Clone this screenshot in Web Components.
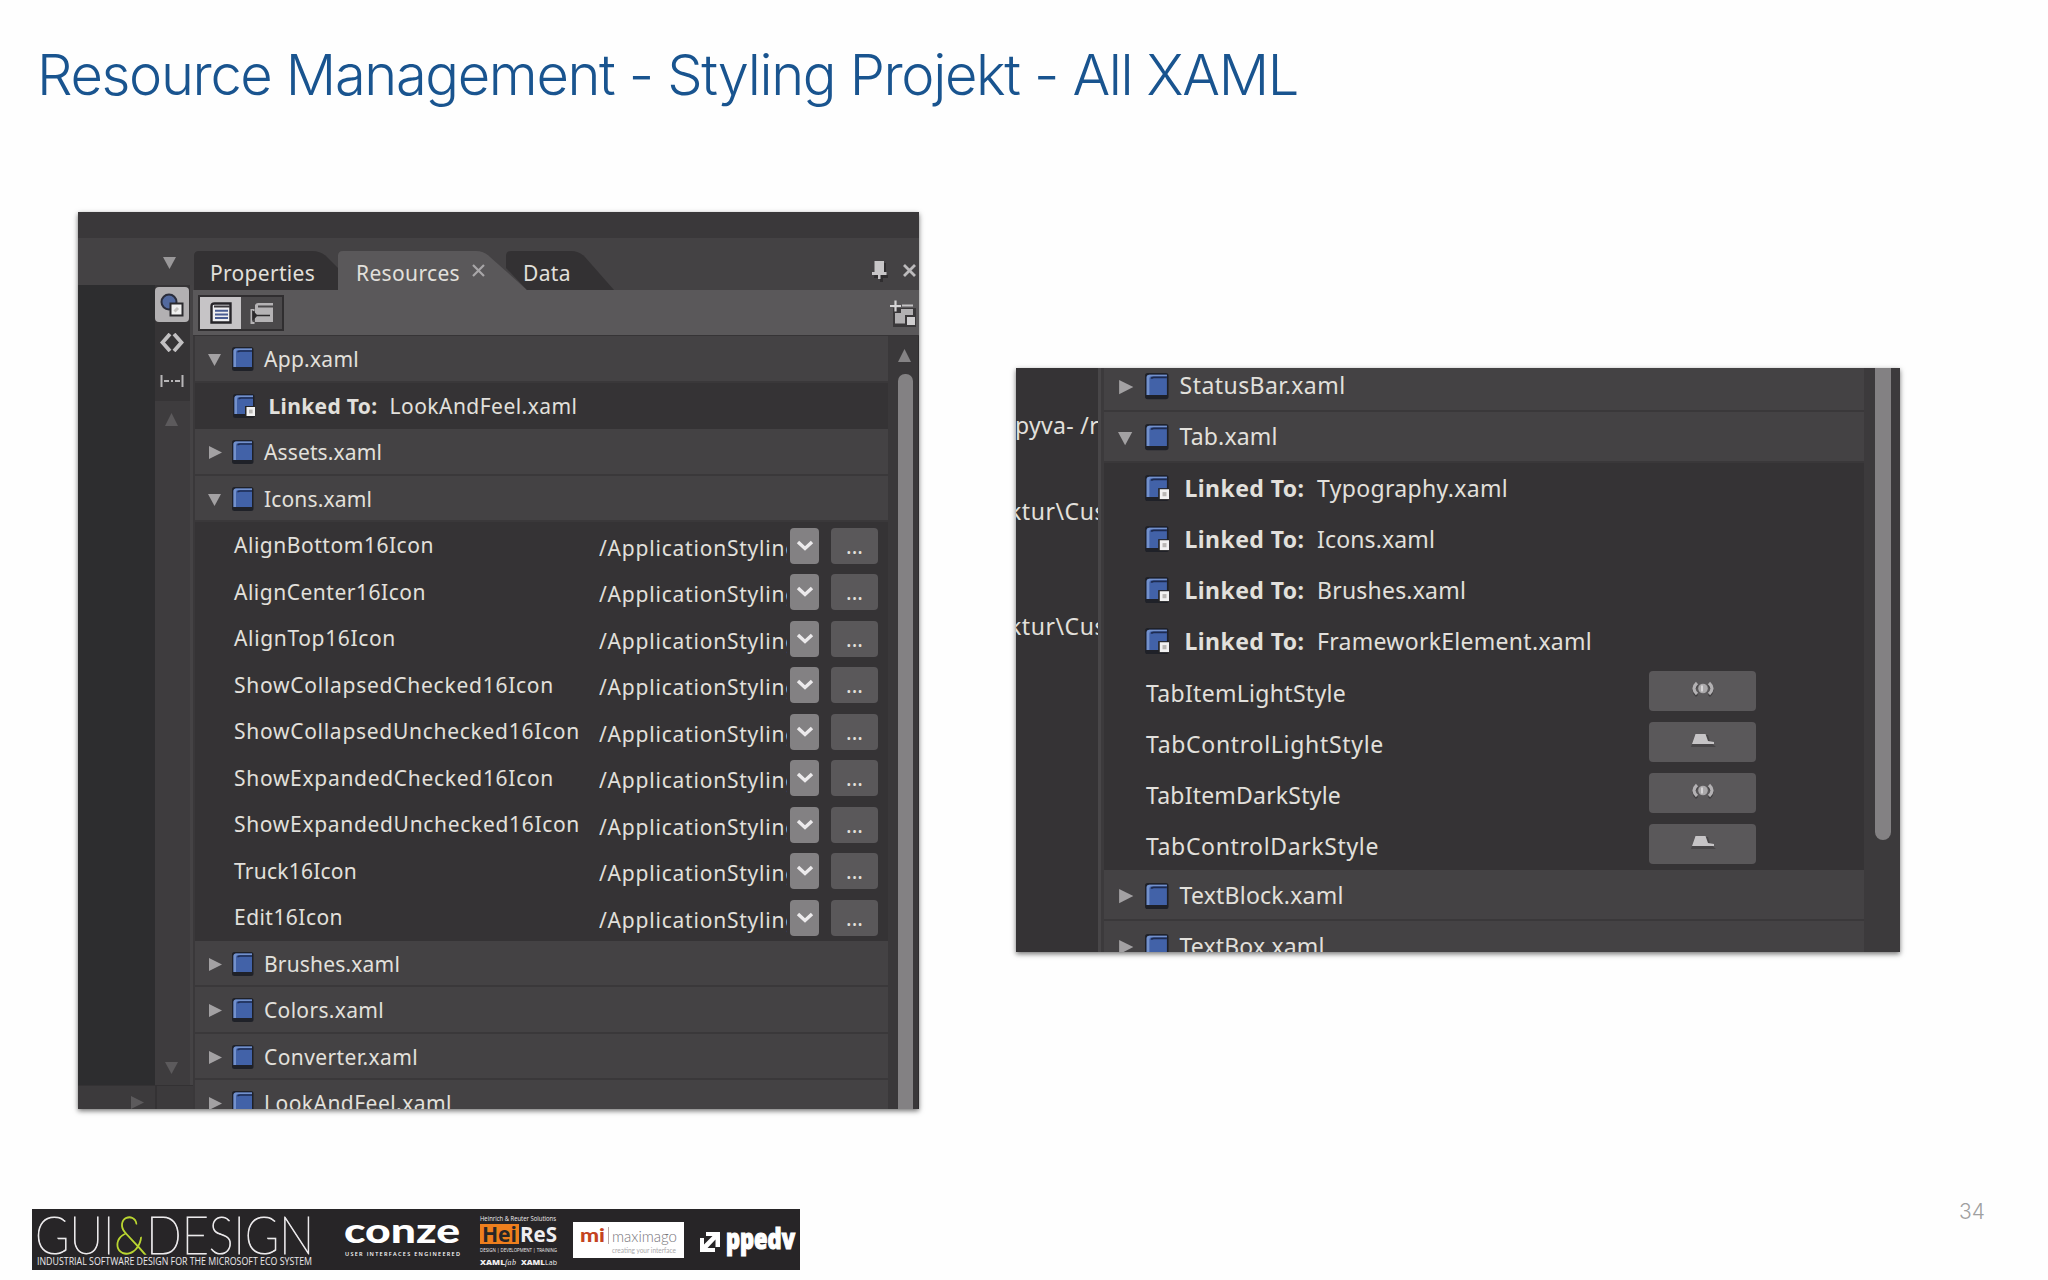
<!DOCTYPE html>
<html lang="de">
<head>
<meta charset="utf-8">
<title>Resource Management</title>
<style>
  body {
    margin: 0;
    background: #fff;
    font-family: "Noto Sans", "Open Sans", sans-serif;
  }
</style>
</head>
<body>
<slide-page number="34">
  <fit-text slot="title" w="1261">Resource Management - Styling Projekt - All XAML</fit-text>
  <resource-window></resource-window>
  <style-window></style-window>
  <sponsor-strip slot="footer"></sponsor-strip>
</slide-page>

<script>
customElements.define('tree-arrow',
  class extends HTMLElement {

    constructor() {
      super();
      this.attachShadow({ mode: 'open' });
    }

    connectedCallback() {
      const points = {
        down: '0,1 13,1 6.5,13',
        right: '1,0 14,6.5 1,13',
        up: '0,13 13,13 6.5,0'
      }[this.getAttribute('to')];
      this.shadowRoot.innerHTML = `
        <style>
          :host {
            display: block;
            flex: none;
            width: calc(14px * var(--k, 1));
            height: calc(14px * var(--k, 1));
            color: #a3a1a3;
          }
          svg { display: block; width: 100%; height: 100%; }
        </style>
        <svg viewBox="0 0 14 14"><polygon points="${ points }" fill="currentColor"/></svg>
      `;
    }

  }
);

// Blue book, with a small white square when it is a link
customElements.define('book-icon',
  class extends HTMLElement {

    constructor() {
      super();
      this.attachShadow({ mode: 'open' });
    }

    connectedCallback() {
      const link = this.hasAttribute('linked') ? `
        <rect x="12" y="12" width="10" height="11" fill="#242426"/>
        <rect x="13.5" y="13" width="8.5" height="9" fill="#f2f2f2"/>
        <rect x="16" y="15.6" width="3.6" height="3.8" fill="#b9b7b5"/>` : '';
      this.shadowRoot.innerHTML = `
        <style>
          :host {
            display: block;
            flex: none;
            width: calc(22px * var(--k, 1));
            height: calc(24px * var(--k, 1));
          }
          svg { display: block; width: 100%; height: 100%; }
        </style>
        <svg viewBox="0 0 22 24">
          <rect x="0" y="0" width="21.5" height="24" rx="2.5" fill="#1f2128"/>
          <path d="M1.5 4 Q1.5 1.5 4 1.5 H20 V20 H1.5 Z" fill="#4262a8"/>
          <path d="M1.5 20 V4 Q1.5 1.5 4 1.5 H20 V3 H6 Q4 3 4 5 V20 Z" fill="#7391cc"/>
          <path d="M6 5.2 Q6 4 8 4 H20" fill="none" stroke="#1d2b50" stroke-width="1.6"/>
          ${ link }
        </svg>
      `;
    }

  }
);

const ROW_STYLE = `
  :host {
    display: flex;
    align-items: center;
    flex: none;
    box-sizing: border-box;
    height: calc(46.5px * var(--k, 1));
    font-size: calc(21px * var(--k, 1));
    color: #e2e0dc;
  }
`;

customElements.define('file-row',
  class extends HTMLElement {

    constructor() {
      super();
      this.attachShadow({ mode: 'open' });
    }

    connectedCallback() {
      this.shadowRoot.innerHTML = `
        <style>
          ${ ROW_STYLE }
          :host {
            padding-left: calc(13px * var(--k, 1));
            background: #444244;
            border-bottom: calc(2.5px * var(--k, 1)) solid #3a383a;
          }
          tree-arrow { margin-top: 4px; }
          book-icon { margin: 2px calc(10px * var(--k, 1)) 0; }
          fit-text { margin-top: var(--text-drop, 2px); }
        </style>
        <tree-arrow to="${ this.hasAttribute('open') ? 'down' : 'right' }"></tree-arrow>
        <book-icon></book-icon>
        <fit-text w="${ this.getAttribute('w') }">${ this.getAttribute('name') }</fit-text>
      `;
    }

  }
);

customElements.define('link-row',
  class extends HTMLElement {

    constructor() {
      super();
      this.attachShadow({ mode: 'open' });
    }

    connectedCallback() {
      this.shadowRoot.innerHTML = `
        <style>
          ${ ROW_STYLE }
          :host { padding-left: calc(37.500px * var(--k, 1)); }
          .label {
            width: calc(121px * var(--k, 1));
            margin-left: calc(14px * var(--k, 1));
            font-weight: 700;
          }
        </style>
        <book-icon linked></book-icon>
        <fit-text class="label" w="${ this.getAttribute('label-w') }">Linked To:</fit-text>
        <fit-text w="${ this.getAttribute('w') }">${ this.getAttribute('name') }</fit-text>
      `;
    }

  }
);

customElements.define('icon-row',
  class extends HTMLElement {

    constructor() {
      super();
      this.attachShadow({ mode: 'open' });
    }

    connectedCallback() {
      this.shadowRoot.innerHTML = `
        <style>
          ${ ROW_STYLE }
          :host { padding-left: 39px; }
          .name { width: 365px; }
          .path {
            width: 188px;
            margin: 5px 3px 0 0;
            overflow: hidden;
          }
          .drop, .more {
            display: flex;
            justify-content: center;
            box-sizing: border-box;
            height: 36px;
            margin-top: 1px;
            border-radius: 4px;
          }
          .drop {
            width: 29px;
            padding-top: 12px;
            background: #838183;
          }
          .more {
            width: 47px;
            margin-left: 12px;
            background: #5a585a;
            line-height: 37px;
          }
        </style>
        <fit-text class="name" w="${ this.getAttribute('w') }">${ this.getAttribute('name') }</fit-text>
        <div class="path"><fit-text w="200">/ApplicationStyling</fit-text></div>
        <div class="drop"><svg width="18" height="13" viewBox="0 0 18 13"><path d="M2 2 L9 8.5 L16 2" fill="none" stroke="#eceaec" stroke-width="3.4"/></svg></div>
        <div class="more">...</div>
      `;
    }

  }
);

customElements.define('style-row',
  class extends HTMLElement {

    constructor() {
      super();
      this.attachShadow({ mode: 'open' });
    }

    connectedCallback() {
      const icons = {
        item: `
          <path d="M6 4 Q0 9.5 6 15 M18 4 Q24 9.5 18 15" fill="none" stroke="#3f3d3f" stroke-width="3"/>
          <path d="M6 2 Q0 7.5 6 13 M18 2 Q24 7.5 18 13" fill="none" stroke="#b3b1b3" stroke-width="3.2"/>
          <circle cx="12" cy="7.5" r="4.8" fill="#aaa8aa"/>
          <path d="M11 4.5 V10.5" stroke="#d6d4d6" stroke-width="2"/>`,
        control: `
          <path d="M0 15 L4 3 H17 L19 10 L25 15 Z" fill="#474547"/>
          <path d="M1 12 L4.500 2 H14.500 L17 9 L23 10 V12 Z" fill="#c6c4c6"/>`
      };
      this.shadowRoot.innerHTML = `
        <style>
          ${ ROW_STYLE }
          :host { padding-left: 42px; }
          .name { width: 503px; margin-top: 2px; }
          .button {
            display: flex;
            justify-content: center;
            box-sizing: border-box;
            width: 107px;
            height: 40px;
            padding: 10px 0 0 2px;
            margin-top: -2px;
            border-radius: 4px;
            background: #5a585a;
          }
        </style>
        <fit-text class="name" w="${ this.getAttribute('w') }">${ this.getAttribute('name') }</fit-text>
        <div class="button"><svg width="25" height="18" viewBox="0 0 25 18">${ icons[this.getAttribute('kind')] }</svg></div>
      `;
    }

  }
);

// Tabs with a slanted right side
customElements.define('panel-tabs',
  class extends HTMLElement {

    constructor() {
      super();
      this.attachShadow({ mode: 'open' });
      this.shadowRoot.innerHTML = `
        <style>
          :host {
            display: flex;
            box-sizing: border-box;
            height: 52px;
            padding: 13px 3px 0 1px;
            background: #444244;
            font-size: 21px;
            color: #e2e0dc;
          }
          .tab {
            display: flex;
            align-items: center;
            box-sizing: border-box;
            height: 39px;
            padding: 4px 0 0 16px;
          }
          .properties {
            width: 144px;
            background: #333133;
            clip-path: path("M0 39 V5 Q0 0 5 0 H118 Q127 0 133 6 L144 17 V39 Z");
          }
          .resources {
            width: 190px;
            padding-left: 18px;
            background: #5a585a;
            clip-path: path("M0 39 V5 Q0 0 5 0 H138 Q146 0 152 6 L189 39 Z");
          }
          .resources svg { margin: -4px 0 0 12px; }
          .data {
            width: 112px;
            margin-left: -25px;
            padding-left: 20px;
            background: #333133;
            clip-path: path("M3 17 V5 Q3 0 8 0 H68 Q76 0 82 6 L111 39 H24 Z");
          }
          .pin { margin: 9px 0 0 auto; }
          .close { margin: 13px 0 0 15px; }
        </style>
        <div class="tab properties"><fit-text w="105">Properties</fit-text></div>
        <div class="tab resources">
          <fit-text w="104">Resources</fit-text>
          <svg width="13" height="13"><path d="M1 1 L12 12 M12 1 L1 12" stroke="#a8a6a8" stroke-width="2.2"/></svg>
        </div>
        <div class="tab data"><fit-text w="48">Data</fit-text></div>
        <svg class="pin" width="17" height="23"><path d="M5 3 H15 V15 H17 V18 H12 V22 H9 V18 H3 Z" fill="#2f2d2f"/><path d="M3.500 1 H13 V12 H15.500 V15 H9.500 V19 H7 V15 H1 V12 H3.500 Z" fill="#c8c6c8"/></svg>
        <svg class="close" width="13" height="13"><path d="M1 1 L12 12 M12 1 L1 12" stroke="#bcbabc" stroke-width="2.8"/></svg>
      `;
    }

  }
);

customElements.define('panel-toolbar',
  class extends HTMLElement {

    constructor() {
      super();
      this.attachShadow({ mode: 'open' });
      this.shadowRoot.innerHTML = `
        <style>
          :host {
            display: flex;
            justify-content: space-between;
            align-items: flex-start;
            box-sizing: border-box;
            height: 46px;
            padding: 5px 2px 0 5px;
            background: #5a585a;
            border-bottom: 1px solid #363436;
          }
          .toggle {
            display: flex;
            border: 2px solid #302e30;
          }
          .toggle div {
            display: flex;
            align-items: center;
            justify-content: center;
            width: 41px;
            height: 32px;
            background: #4b494b;
          }
          .toggle .active { background: #c6c4c6; }
          .add { margin-top: 5px; }
        </style>
        <div class="toggle">
          <div class="active"><svg width="22" height="22">
            <path d="M1.500 20.500 V4.500 Q1.500 1.500 4.500 1.500 H20.500 V20.500 Z" fill="#eeeef0" stroke="#262428" stroke-width="2.400"/>
            <path d="M4 4.500 H20" stroke="#39373b" stroke-width="2"/>
            <path d="M5 8.700 H18 M5 12.400 H18 M5 16.100 H18" stroke="#4a5d92" stroke-width="2"/>
          </svg></div>
          <div><svg width="24" height="22">
            <path d="M5 20 V3 Q6 1 8 1 H23 V20 Z" fill="#b5b3b5"/>
            <path d="M8 4.500 H23" stroke="#4b494b" stroke-width="2"/>
            <path d="M1.500 7 V21 H4.500 M1.500 8 H4.500" fill="none" stroke="#b5b3b5" stroke-width="2"/>
            <path d="M3 10 L6.500 13.500 L3 17 Z M7 13.500 H20" fill="#2b292b" stroke="#2b292b" stroke-width="1.600"/>
          </svg></div>
        </div>
        <svg class="add" width="28" height="27">
          <path d="M4 8 H27 V27 H4 Z" fill="#3a383a"/>
          <path d="M1 6 H12 M6.500 0.500 V11.500" stroke="#d6d4d6" stroke-width="2.200"/>
          <path d="M13 5.500 H24" stroke="#c4c2c4" stroke-width="2"/>
          <path d="M6 13 V23.500 H16 V15 H24 V9 H12 V13 Z" fill="#b2b0b2"/>
          <rect x="18" y="17" width="8" height="8" fill="#d0ced0"/>
        </svg>
      `;
    }

  }
);

customElements.define('tool-strip',
  class extends HTMLElement {

    constructor() {
      super();
      this.attachShadow({ mode: 'open' });
      this.shadowRoot.innerHTML = `
        <style>
          :host {
            display: grid;
            grid-template: 47px 800px 1fr / 77px 38px;
            background: #3c3a3c;
          }
          .head {
            grid-column: 1 / 3;
            padding: 18px 0 0 85px;
            background: #444244;
          }
          .head tree-arrow { color: #9a989a; }
          .canvas { background: #2d2d2f; }
          .tools {
            display: flex;
            flex-direction: column;
            box-sizing: border-box;
            background: #363436;
            border-right: 3px solid #454345;
          }
          .button {
            display: flex;
            align-items: center;
            justify-content: center;
            height: 35px;
            margin: 2px 1px 0 0;
            border-radius: 4px;
            background: #b2b0b2;
          }
          .code { margin: 11px 0 0 5px; }
          .note { margin: 23px 0 0 5px; }
          .scroll {
            display: flex;
            flex-direction: column;
            justify-content: space-between;
            align-items: center;
            flex: 1;
            margin-top: 14px;
            padding: 12px 1px 10px 0;
            background: #3e3c3e;
          }
          .scroll tree-arrow { color: #5c5a5c; }
          .corner {
            padding: 10px 0 0 52px;
            border-top: 1px solid #343234;
          }
          .corner tree-arrow { color: #5c5a5c; }
          .end {
            border-top: 1px solid #333133;
            border-left: 2px solid #343234;
          }
        </style>
        <div class="head"><tree-arrow to="down"></tree-arrow></div>
        <div class="canvas"></div>
        <div class="tools">
          <div class="button"><svg width="24" height="24">
            <circle cx="9" cy="9" r="7.500" fill="#52699f" stroke="#2a2d3c" stroke-width="2"/>
            <rect x="10.500" y="10.500" width="12" height="12" fill="#f0f0f0" stroke="#2b2a2e" stroke-width="2"/>
            <path d="M14.500 18.500 L18 15" stroke="#c4c2c0" stroke-width="3"/>
          </svg></div>
          <svg class="code" width="24" height="19"><path d="M10 1 L2.500 9.500 L10 18 M14 1 L21.500 9.500 L14 18" fill="none" stroke="#c2c0c2" stroke-width="3.800"/></svg>
          <svg class="note" width="24" height="12"><path d="M1.500 0 V12 M22.500 0 V12" stroke="#b8b6b8" stroke-width="2"/><path d="M4 6 H9 M11 6 H13 M15 6 H20" stroke="#b8b6b8" stroke-width="2.200"/></svg>
          <div class="scroll">
            <tree-arrow to="up"></tree-arrow>
            <tree-arrow to="down"></tree-arrow>
          </div>
        </div>
        <div class="corner"><tree-arrow to="right"></tree-arrow></div>
        <div class="end"></div>
      `;
    }

  }
);

customElements.define('resource-window',
  class extends HTMLElement {

    constructor() {
      super();
      this.attachShadow({ mode: 'open' });
    }

    connectedCallback() {
      const icons = [
        ['AlignBottom16Icon', 200],
        ['AlignCenter16Icon', 192],
        ['AlignTop16Icon', 162],
        ['ShowCollapsedChecked16Icon', 320],
        ['ShowCollapsedUnchecked16Icon', 346],
        ['ShowExpandedChecked16Icon', 320],
        ['ShowExpandedUnchecked16Icon', 346],
        ['Truck16Icon', 123],
        ['Edit16Icon', 109]
      ];
      this.shadowRoot.innerHTML = `
        <style>
          :host {
            display: grid;
            grid-template: 26px 871px / 115px 726px;
            width: 841px;
            height: 897px;
            overflow: hidden;
            background: #3a383a;
            box-shadow: 0 2px 5px rgba(0, 0, 0, 0.55);
          }
          .bar { grid-column: 1 / 3; }
          .panel {
            display: flex;
            flex-direction: column;
            min-height: 0;
          }
          .body {
            display: flex;
            flex: 1;
            min-height: 0;
          }
          .list {
            display: flex;
            flex-direction: column;
            width: 693px;
            margin-left: 2px;
            overflow: hidden;
            background: #353335;
          }
          .scroll {
            display: flex;
            flex-direction: column;
            align-items: center;
            flex: 1;
            padding: 13px 0 0 4px;
            border-right: 1px solid #2f2d2f;
          }
          .scroll tree-arrow { color: #858385; }
          .thumb {
            flex: 1;
            width: 15px;
            margin-top: 11px;
            border-radius: 7px 7px 0 0;
            background: #838183;
          }
        </style>
        <div class="bar"></div>
        <tool-strip></tool-strip>
        <div class="panel">
          <panel-tabs></panel-tabs>
          <panel-toolbar></panel-toolbar>
          <div class="body">
            <div class="list">
              <file-row open name="App.xaml" w="95"></file-row>
              <link-row name="LookAndFeel.xaml" label-w="109" w="188"></link-row>
              <file-row name="Assets.xaml" w="118"></file-row>
              <file-row open name="Icons.xaml" w="108"></file-row>
              ${ icons.map(([name, w]) => `<icon-row name="${ name }" w="${ w }"></icon-row>`).join('') }
              <file-row name="Brushes.xaml" w="136"></file-row>
              <file-row name="Colors.xaml" w="120"></file-row>
              <file-row name="Converter.xaml" w="154"></file-row>
              <file-row name="LookAndFeel.xaml" w="188"></file-row>
            </div>
            <div class="scroll">
              <tree-arrow to="up"></tree-arrow>
              <div class="thumb"></div>
            </div>
          </div>
        </div>
      `;
    }

  }
);

customElements.define('style-window',
  class extends HTMLElement {

    constructor() {
      super();
      this.attachShadow({ mode: 'open' });
      this.shadowRoot.innerHTML = `
        <style>
          :host {
            --k: 1.0955;
            --text-drop: 0;
            display: flex;
            width: 884px;
            height: 584px;
            overflow: hidden;
            background: #3c3a3c;
            box-shadow: 0 2px 5px rgba(0, 0, 0, 0.55);
          }
          .paths {
            display: flex;
            flex-direction: column;
            box-sizing: border-box;
            width: 82px;
            padding-top: 41px;
            overflow: hidden;
            background: #353335;
            font-size: 23px;
            line-height: 32px;
            color: #e2e0dc;
          }
          .paths fit-text { height: 32px; }
          .paths .first { margin: 0 0 54px -1px; }
          .paths .cut { margin: 0 0 83px -7px; }
          .splitter {
            width: 3px;
            margin-right: 3px;
            background: #484648;
          }
          .list {
            display: flex;
            flex-direction: column;
            width: 760px;
            overflow: hidden;
            background: #353335;
          }
          .list file-row:first-child { margin-top: -7px; }
          .thumb {
            width: 16px;
            height: 472px;
            margin-left: 11px;
            border-radius: 0 0 8px 8px;
            background: #838183;
          }
        </style>
        <div class="paths">
          <fit-text class="first" w="84">pyva- /r</fit-text>
          <fit-text class="cut" w="97">ktur\\Cus</fit-text>
          <fit-text class="cut" w="97">ktur\\Cus</fit-text>
        </div>
        <div class="splitter"></div>
        <div class="list">
          <file-row name="StatusBar.xaml" w="166"></file-row>
          <file-row open name="Tab.xaml" w="98"></file-row>
          <link-row name="Typography.xaml" label-w="120" w="191"></link-row>
          <link-row name="Icons.xaml" label-w="120" w="118"></link-row>
          <link-row name="Brushes.xaml" label-w="120" w="149"></link-row>
          <link-row name="FrameworkElement.xaml" label-w="120" w="275"></link-row>
          <style-row kind="item" name="TabItemLightStyle" w="200"></style-row>
          <style-row kind="control" name="TabControlLightStyle" w="238"></style-row>
          <style-row kind="item" name="TabItemDarkStyle" w="195"></style-row>
          <style-row kind="control" name="TabControlDarkStyle" w="233"></style-row>
          <file-row name="TextBlock.xaml" w="164"></file-row>
          <file-row name="TextBox.xaml" w="145"></file-row>
        </div>
        <div class="thumb"></div>
      `;
    }

  }
);

customElements.define('sponsor-strip',
  class extends HTMLElement {

    constructor() {
      super();
      this.attachShadow({ mode: 'open' });
      this.shadowRoot.innerHTML = `
        <style>
          :host {
            display: flex;
            width: 768px;
            height: 61px;
            background: #272527;
          }
          svg {
            display: block;
            flex: none;
            height: 61px;
          }
        </style>
        <svg width="300" viewBox="0 0 300 61" fill="#eceaec" font-family="Lato, sans-serif">
          <text x="3" y="45" font-size="52" font-weight="100" stroke="#eceaec" stroke-width="1" textLength="279" lengthAdjust="spacingAndGlyphs">GUI<tspan fill="#b9d531" stroke="#b9d531" stroke-width="1.300">&amp;</tspan>DESIGN</text>
          <text x="5" y="56" font-family="Open Sans, sans-serif" font-size="10" textLength="275" lengthAdjust="spacingAndGlyphs">INDUSTRIAL SOFTWARE DESIGN FOR THE MICROSOFT ECO SYSTEM</text>
        </svg>
        <svg width="140" viewBox="300 0 140 61" fill="#fff">
          <text x="312" y="34" font-family="Lato, sans-serif" font-size="34" font-weight="900" textLength="116" lengthAdjust="spacingAndGlyphs">conze</text>
          <text x="313" y="47" font-family="Open Sans, sans-serif" font-size="5.500" font-weight="600" textLength="115">USER INTERFACES ENGINEERED</text>
        </svg>
        <svg width="95" viewBox="440 0 95 61" fill="#f0eef0" font-family="Open Sans, sans-serif">
          <text x="448" y="12" font-size="6.500" textLength="76" lengthAdjust="spacingAndGlyphs">Heinrich &amp; Reuter Solutions</text>
          <rect x="448" y="15" width="39" height="20" fill="#ee7f1d"/>
          <text x="450" y="33" font-size="22" font-weight="700" fill="#272527" textLength="35" lengthAdjust="spacingAndGlyphs">Hei</text>
          <text x="488" y="33" font-size="21" font-weight="700" textLength="37" lengthAdjust="spacingAndGlyphs">ReS</text>
          <text x="448" y="43" font-size="5" textLength="77" lengthAdjust="spacingAndGlyphs">DESIGN | DEVELOPMENT | TRAINING</text>
          <text x="448" y="56" font-size="7" font-weight="800" textLength="25" lengthAdjust="spacingAndGlyphs">XAML</text>
          <text x="473" y="56" font-family="Liberation Serif, serif" font-style="italic" font-size="8" textLength="11">fab</text>
          <text x="489" y="56" font-size="7" font-weight="800" textLength="24" lengthAdjust="spacingAndGlyphs">XAML</text>
          <text x="513" y="56" font-size="7" textLength="12">Lab</text>
        </svg>
        <svg width="125" viewBox="535 0 125 61" font-family="Lato, sans-serif">
          <rect x="541" y="13" width="111" height="36" fill="#fff"/>
          <text x="548" y="33" font-size="19" font-weight="900" fill="#c4431f" textLength="25" lengthAdjust="spacingAndGlyphs">mi</text>
          <path d="M576.500 18 V35" stroke="#b9a6a2" stroke-width="1"/>
          <text x="580" y="33" font-size="15" font-weight="300" fill="#77757a" textLength="65" lengthAdjust="spacingAndGlyphs">maximago</text>
          <text x="580" y="44" font-size="7" fill="#aaa8aa" textLength="64" lengthAdjust="spacingAndGlyphs">creating your interface</text>
        </svg>
        <svg width="108" viewBox="660 0 108 61" fill="#fff">
          <path d="M674 23 H688 V38 H683.500 V30.500 L675.500 39 H683 V43 H668 V29 H672 V35.500 L680.500 27 H674 Z"/>
          <text x="694" y="40" font-family="Open Sans, sans-serif" font-size="28" font-weight="800" stroke="#fff" stroke-width="1.200" textLength="69" lengthAdjust="spacingAndGlyphs">ppedv</text>
        </svg>
      `;
    }

  }
);

customElements.define('slide-page',
  class extends HTMLElement {

    constructor() {
      super();
      this.attachShadow({ mode: 'open' });
    }

    connectedCallback() {
      this.shadowRoot.innerHTML = `
        <style>
          :host {
            display: grid;
            grid-template: 212px 1fr 71px / 2048px;
            box-sizing: border-box;
            width: 2048px;
            height: 1280px;
            overflow: hidden;
            background: #fefefe;
          }
          header {
            padding: 40px 0 0 37px;
            font-family: Inter, "Liberation Sans", sans-serif;
            font-size: 56px;
            font-weight: 300;
            line-height: 70px;
            color: #19548f;
          }
          main {
            display: flex;
            align-items: flex-start;
            gap: 97px;
            padding-left: 78px;
          }
          ::slotted(style-window) { margin-top: 156px; }
          footer {
            display: flex;
            justify-content: space-between;
            align-items: flex-start;
            padding: 0 63px 0 32px;
          }
          .number {
            margin-top: -12px;
            font: 300 21px/30px Inter, "Liberation Sans", sans-serif;
            color: #a0a0a0;
          }
        </style>
        <header><slot name="title"></slot></header>
        <main><slot></slot></main>
        <footer>
          <slot name="footer"></slot>
          <div class="number">${ this.getAttribute('number') }</div>
        </footer>
      `;
    }

  }
);

// Text that spreads its letters over a given width.
// Defined last: it measures itself, so the fonts around it must be set by then.
customElements.define('fit-text',
  class extends HTMLElement {

    constructor() {
      super();
      this.attachShadow({ mode: 'open' });
      this.shadowRoot.innerHTML = `
        <style>
          :host {
            display: block;
            flex: none;
          }
          span {
            display: inline-block;
            white-space: pre;
          }
        </style>
        <span><slot></slot></span>
      `;
    }

    connectedCallback() {
      const width = Number(this.getAttribute('w'));
      if (!width) {
        return;
      }
      const span = this.shadowRoot.querySelector('span');
      const count = this.textContent.length;
      span.style.letterSpacing = '0';
      const natural = span.getBoundingClientRect().width;
      span.style.letterSpacing = `${ (width - natural) / count }px`;
    }

  }
);
</script>
</body>
</html>
